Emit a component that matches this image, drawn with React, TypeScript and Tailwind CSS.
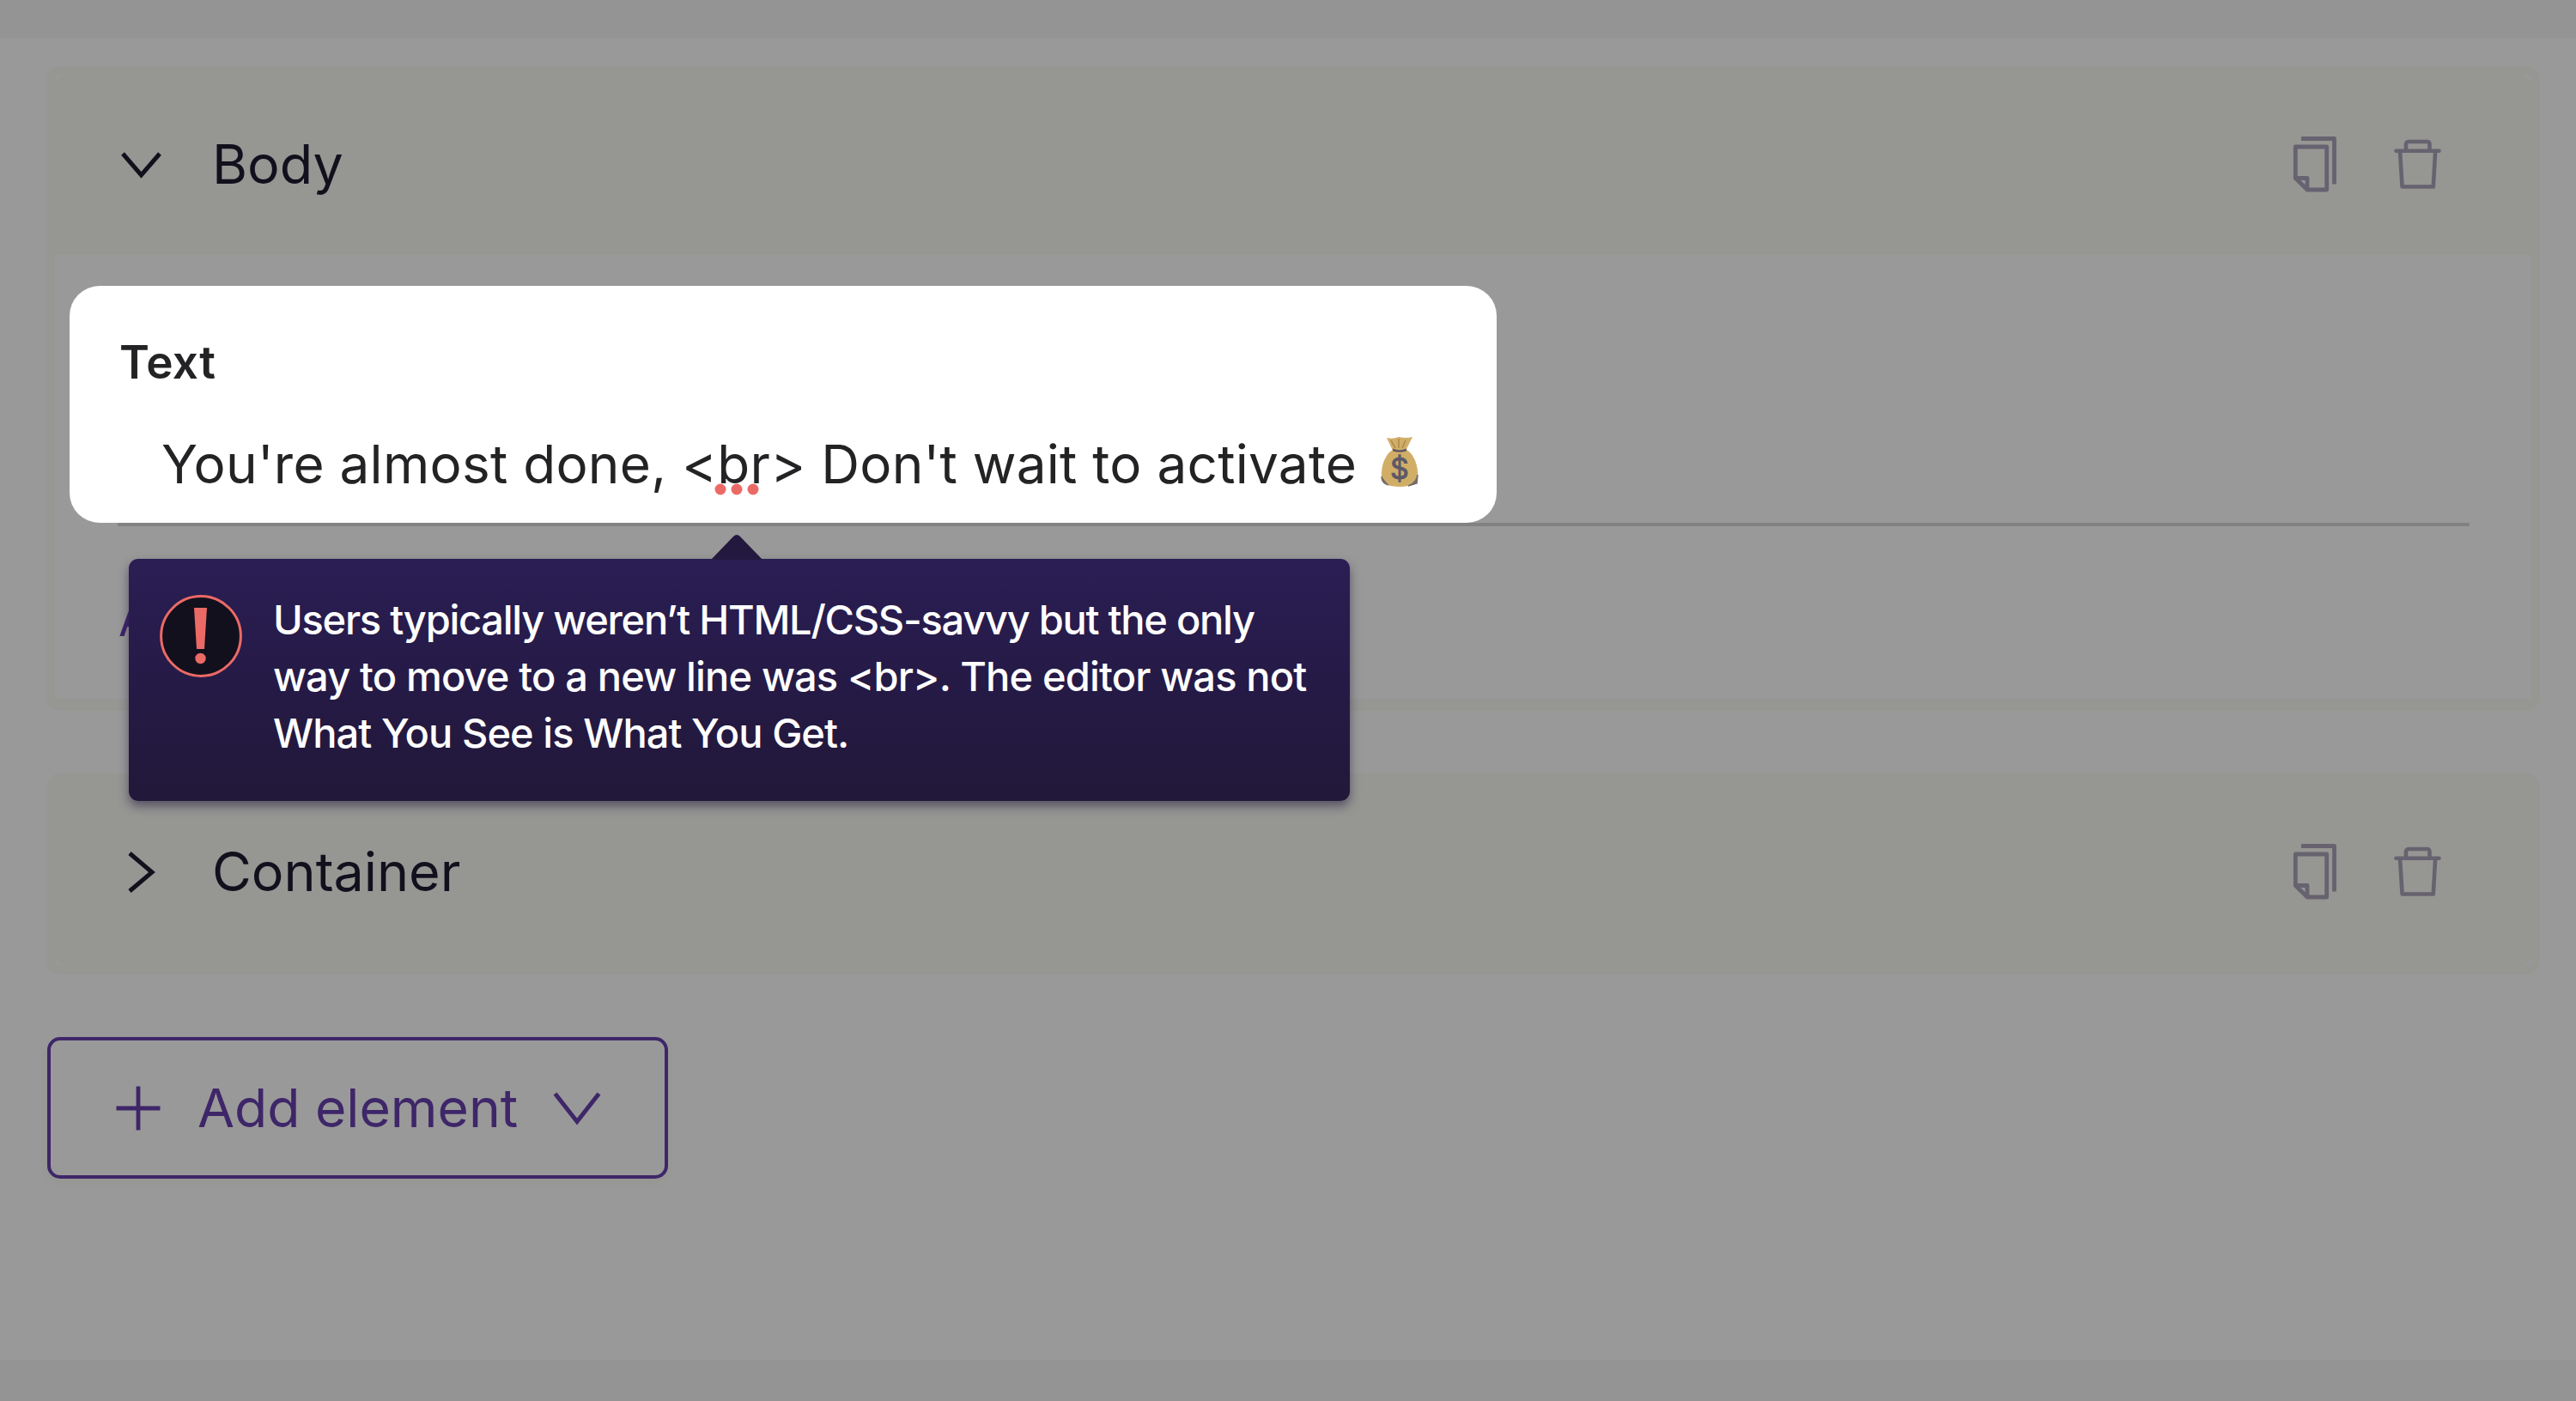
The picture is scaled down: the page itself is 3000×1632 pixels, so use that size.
import type { ReactNode } from "react";

type SectionHeaderProps = {
  title: string;
  open?: boolean;
};

function CopyIcon() {
  return (
    <svg width="56" height="72" viewBox="0 0 56 72" fill="none" stroke="currentColor" strokeWidth="4.8">
      <path d="M12 5.500H50.500V58.500" strokeLinejoin="round" />
      <path d="M5.300 15H41.700V65H19L5.300 51.500Z" strokeLinejoin="round" />
      <path d="M5.300 51.500H19V65" strokeLinejoin="round" />
    </svg>
  );
}

function TrashIcon() {
  return (
    <svg width="60" height="64" viewBox="0 0 60 64" fill="none" stroke="currentColor" strokeWidth="4.6">
      <path d="M6.500 15.700H56.500" strokeLinecap="round" />
      <path d="M18 15.700V8.500Q18 5 21 5H42.500Q45.500 5 45.500 8.500V15.700" />
      <path d="M11 15.700L13.600 57.500H49.800L52.200 15.700" strokeLinejoin="round" />
    </svg>
  );
}

function Chevron({ open }: { open?: boolean }) {
  return (
    <svg width="48" height="48" viewBox="0 0 48 48" fill="none" stroke="currentColor" strokeWidth="5">
      <path d={open ? "M2 11L23.500 36L45 11" : "M10 2L36 24L10 46"} />
    </svg>
  );
}

function MoneyBag() {
  return (
    <svg className="mb-1.5 ml-[9px]" width="46" height="62" viewBox="0 0 46 62">
      <path d="M8 3Q15 5 22 2Q30 4 38 2L30 18H15Z" fill="#d1ae67" />
      <path d="M22 4V15M30 6L26 15M13 6L18 15" stroke="#a68447" strokeWidth="1.3" />
      <path d="M15 17H31C40 22 45 36 44 49Q43 60 23 60Q3 60 2 49C1 36 6 22 15 17Z" fill="#d1ae67" />
      <path d="M2 48Q2 56 10 58M44 46Q43 55 33 59L43 56Z" stroke="#756b6b" strokeWidth="1.5" fill="#756b6b" />
      <path d="M15 15.5Q23 19 31 15.5V18.5Q23 21 15 18.5Z" fill="#655b65" />
      <text x="23" y="51" textAnchor="middle" fontSize="34" fill="#5c5967" stroke="#5c5967" strokeWidth="1" className="font-['Inter',sans-serif] tracking-normal">$</text>
    </svg>
  );
}

function SectionHeader({ title, open }: SectionHeaderProps) {
  return (
    <header className="flex h-[210px] items-center justify-between rounded-t-[14px] bg-[#969693] pr-[104px] pl-[77px] text-[#13101d]">
      <div className="flex items-center gap-[58px]">
        <Chevron open={open} />
        <h2 className="-mt-px text-[62.8px] leading-none">{title}</h2>
      </div>
      <div className="flex items-center gap-[60px] text-[#67626f]">
        <CopyIcon />
        <TrashIcon />
      </div>
    </header>
  );
}

function Tooltip({ children }: { children: ReactNode }) {
  return (
    <div className="absolute top-[564px] left-[86px] flex h-[282px] w-[1422px] rounded-[11px] bg-linear-to-b from-[#2a1e54] via-[#251a45] via-55% to-[#211839] shadow-[0_6px_12px_rgba(25,15,55,0.5)]">
      <svg className="absolute -top-[29px] left-[676px]" width="64" height="30" viewBox="0 0 64 30">
        <path d="M2 30L28 3Q32 -1 36 3L62 30Z" fill="#23193f" />
      </svg>
      <svg className="mt-[42px] ml-9 shrink-0" width="96" height="96" viewBox="0 0 96 96">
        <circle cx="48" cy="48" r="46.4" fill="#13101d" stroke="#ec6a66" strokeWidth="3" />
        <path d="M40 15H55L52 63H43Z" fill="#ec6a66" />
        <circle cx="47.5" cy="74" r="6.2" fill="#ec6a66" />
      </svg>
      <div className="mt-[38px] ml-9 text-[47px] leading-[66px] font-medium whitespace-nowrap text-white">{children}</div>
    </div>
  );
}

export default function App() {
  return (
    <div className="h-[1632px] w-[3000px] overflow-hidden bg-[#949494] pt-[45px] font-['Inter',sans-serif]">
      <main className="h-[1539px] bg-[#999999] pt-8 pr-[42px] pl-[54px]">
        <section className="relative h-[751px] rounded-[16px] border-[10px] border-b-[14px] border-[#969693] bg-[#999999]">
          <SectionHeader title="Body" open />
          <div className="pt-9 pl-[17px]">
            <div className="h-[276px] w-[1662px] rounded-[35px] bg-white pt-[54px] pl-[58px] text-[#232325]">
              <p className="text-[53px] leading-[70px] font-semibold tracking-[0.4px]">Text</p>
              <p className="mt-[44px] flex items-center pl-[49px] text-[62px] leading-[80px] tracking-[0.27px] whitespace-pre">
                <span>You're almost done, &lt;</span>
                <span className="relative">
                  br
                  <svg className="absolute top-[62px] left-[-3px]" width="52" height="14" viewBox="0 0 52 14" fill="#ec6a66">
                    <circle cx="7" cy="7" r="6.5" />
                    <circle cx="26" cy="7" r="6.5" />
                    <circle cx="45" cy="7" r="6.5" />
                  </svg>
                </span>
                <span>&gt; Don't wait to activate </span>
                <MoneyBag />
              </p>
            </div>
            <div className="ml-[56px] h-1 w-[2739px] bg-[#828283]" />
            <p className="mt-[77px] ml-[57px] text-[53px] leading-[64px] text-[#3e2669]">A</p>
          </div>
          <Tooltip>
            <p className="w-max tracking-[-1.26px]">Users typically weren’t HTML/CSS-savvy but the only</p>
            <p className="w-max tracking-[-0.84px]">way to move to a new line was &lt;br&gt;. The editor was not</p>
            <p className="w-max tracking-[-0.94px]">What You See is What You Get.</p>
          </Tooltip>
        </section>

        <section className="mt-[73px] h-[234px] rounded-[16px] border-[10px] border-[#969693] bg-[#999999]">
          <div className="h-full overflow-hidden rounded-b-[14px] bg-[#969693]">
            <SectionHeader title="Container" />
          </div>
        </section>

        <button className="mt-[73px] ml-px flex h-[165px] w-[723px] items-center rounded-[15px] border-4 border-[#3e2669] pl-[76px] text-[62.4px] text-[#3e2669] shadow-[0_5px_5px_rgba(145,145,135,0.35)]">
          <svg width="52" height="52" viewBox="0 0 52 52" stroke="currentColor" strokeWidth="4.8">
            <path d="M0.500 26H51.500M26 0.500V51.500" />
          </svg>
          <span className="ml-[43px]">Add element</span>
          <svg className="ml-[41px]" width="56" height="40" viewBox="0 0 56 40" fill="none" stroke="currentColor" strokeWidth="5">
            <path d="M2.500 3L28 35.500L53.500 3" />
          </svg>
        </button>
      </main>
    </div>
  );
}
